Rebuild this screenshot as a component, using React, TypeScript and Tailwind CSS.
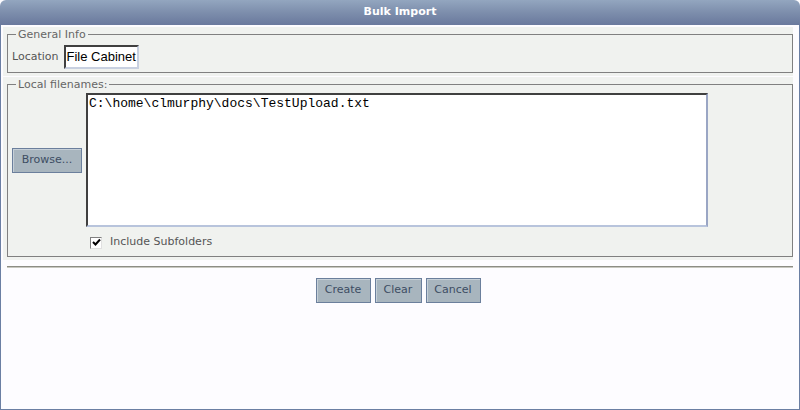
export default function App() {
  return (
    <div className="w-[800px] h-[410px] flex flex-col bg-[#fdfcff] font-['DejaVu_Sans',Verdana,sans-serif] text-[11px]">
      <div className="h-[25px] shrink-0 rounded-t-[6px] bg-gradient-to-b from-[#93a6bf] via-[#7d8eac] to-[#6a799d] flex items-center justify-center text-white font-bold text-[11px]">
        Bulk Import
      </div>
      <div className="flex-1 flex flex-col border-x border-b border-[#6b7fa3] pl-[2px] pr-[6px] pt-[2px]">
        {/* General Info */}
        <div className="bg-[#f0f2ef] pl-[4px] pt-[1px] pb-[3px]">
          <fieldset className="border border-[#808080] pl-[4px] pr-2 pb-[3px] pt-[6px]">
            <legend className="ml-[4px] px-[2px] text-[#666] leading-[13px]">General Info</legend>
            <div className="flex items-center gap-[5px] h-[24px] -mt-[2px]">
              <span className="text-[#555]">Location</span>
              <div className="w-[75px] h-[24px] border-2 border-t-[#404040] border-l-[#404040] border-b-[#c8d0e0] border-r-[#c8d0e0] bg-white flex items-center pl-[1px] font-['Liberation_Sans',Arial,sans-serif] text-[13px] text-black">
                File Cabinet
              </div>
            </div>
          </fieldset>
        </div>
        {/* Local filenames */}
        <div className="bg-[#f0f2ef] pl-[4px] pt-[1px] pb-[3px] mt-[1px]">
          <fieldset className="border border-[#808080] pl-[4px] pr-2 pt-[2px] pb-[7px]">
            <legend className="ml-[4px] px-[2px] text-[#666] leading-[13px]">Local filenames:</legend>
            <div className="flex items-center gap-[4px]">
              <button className="w-[70px] h-[25px] bg-[#a8b5be] border border-[#6b7f9c] shadow-[inset_1px_1px_0_#c6d0d8] text-[#3d4d63]">
                Browse...
              </button>
              <div className="w-[622px] h-[134px] border-2 border-t-[#404040] border-l-[#404040] border-b-[#b8c4dc] border-r-[#9aa6c4] bg-white pl-[1px] pt-[1px] font-['Liberation_Mono','Courier_New',monospace] text-[13px] text-black leading-[15px]">
                C:\home\clmurphy\docs\TestUpload.txt
              </div>
            </div>
            <div className="flex items-center gap-[8px] ml-[78px] mt-[9px] h-[13px]">
              <div className="w-[12px] h-[12px] border border-t-[#808080] border-l-[#808080] border-b-[#e0e0e0] border-r-[#e0e0e0] bg-white flex items-center justify-center">
                <svg width="9" height="9" viewBox="0 0 9 9">
                  <path d="M1 4 L3.5 6.5 L8 1.5" stroke="#000" strokeWidth="2" fill="none" />
                </svg>
              </div>
              <span className="text-[#555]">Include Subfolders</span>
            </div>
          </fieldset>
        </div>
        <div className="ml-[4px] mt-[6px] h-[2px] border-t border-[#8c8c84] border-b border-b-[#c8c8c0]" />
        <div className="flex justify-center gap-[4px] mt-[10px]">
          <button className="w-[55px] h-[25px] bg-[#a8b5be] border border-[#6b7f9c] shadow-[inset_1px_1px_0_#c6d0d8] text-[#3d4d63]">
            Create
          </button>
          <button className="w-[47px] h-[25px] bg-[#a8b5be] border border-[#6b7f9c] shadow-[inset_1px_1px_0_#c6d0d8] text-[#3d4d63]">
            Clear
          </button>
          <button className="w-[55px] h-[25px] bg-[#a8b5be] border border-[#6b7f9c] shadow-[inset_1px_1px_0_#c6d0d8] text-[#3d4d63]">
            Cancel
          </button>
        </div>
      </div>
    </div>
  );
}
